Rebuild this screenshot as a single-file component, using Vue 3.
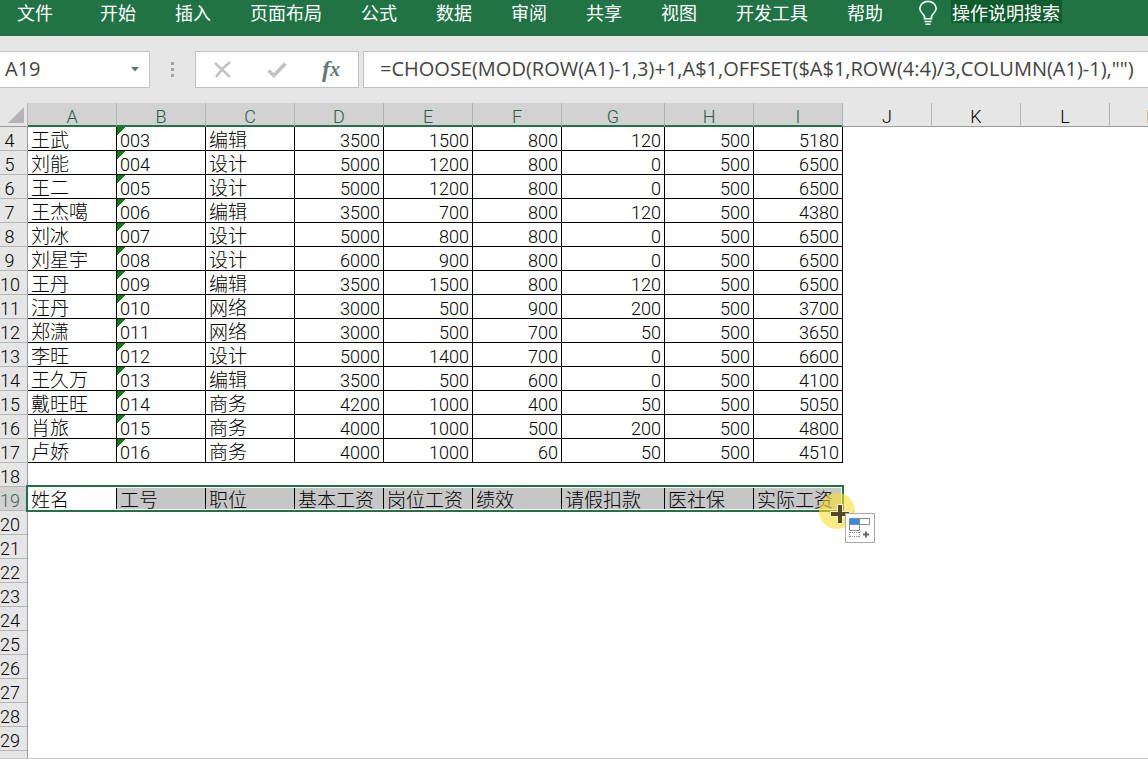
<script setup>
import { ref } from 'vue'

const tabs = ['开始', '插入', '页面布局', '公式', '数据', '审阅', '共享', '视图', '开发工具', '帮助']
const columns = ['A', 'B', 'C', 'D', 'E', 'F', 'G', 'H', 'I', 'J', 'K', 'L', 'M']
const selectedColumns = 9

const cellName = ref('A19')
const formula = ref('=CHOOSE(MOD(ROW(A1)-1,3)+1,A$1,OFFSET($A$1,ROW(4:4)/3,COLUMN(A1)-1),"")')

const staff = [
  ['王武', '003', '编辑', 3500, 1500, 800, 120, 500, 5180],
  ['刘能', '004', '设计', 5000, 1200, 800, 0, 500, 6500],
  ['王二', '005', '设计', 5000, 1200, 800, 0, 500, 6500],
  ['王杰噶', '006', '编辑', 3500, 700, 800, 120, 500, 4380],
  ['刘冰', '007', '设计', 5000, 800, 800, 0, 500, 6500],
  ['刘星宇', '008', '设计', 6000, 900, 800, 0, 500, 6500],
  ['王丹', '009', '编辑', 3500, 1500, 800, 120, 500, 6500],
  ['汪丹', '010', '网络', 3000, 500, 900, 200, 500, 3700],
  ['郑潇', '011', '网络', 3000, 500, 700, 50, 500, 3650],
  ['李旺', '012', '设计', 5000, 1400, 700, 0, 500, 6600],
  ['王久万', '013', '编辑', 3500, 500, 600, 0, 500, 4100],
  ['戴旺旺', '014', '商务', 4200, 1000, 400, 50, 500, 5050],
  ['肖旅', '015', '商务', 4000, 1000, 500, 200, 500, 4800],
  ['卢娇', '016', '商务', 4000, 1000, 60, 50, 500, 4510],
]
const titles = ['姓名', '工号', '职位', '基本工资', '岗位工资', '绩效', '请假扣款', '医社保', '实际工资']

const rows = []
for (let n = 4; n <= 30; n++) {
  if (n <= 17) rows.push({ n, kind: 'data', cells: staff[n - 4] })
  else if (n === 19) rows.push({ n, kind: 'selected', cells: titles })
  else rows.push({ n, kind: 'blank', cells: [] })
}

const cellClass = (row, i) => ({
  used: i < row.cells.length,
  num: typeof row.cells[i] === 'number',
  flag: row.kind === 'data' && i === 1,
  han: i < row.cells.length && (row.kind === 'selected' || i === 0 || i === 2),
})
</script>

<template>
  <div class="app">
    <nav class="ribbon" aria-label="功能区">
      <button class="tab file">文件</button>
      <button v-for="t in tabs" :key="t" class="tab">{{ t }}</button>
      <svg class="bulb" viewBox="0 0 20 26" aria-hidden="true">
        <path d="M6.500 18.800v-2.300c0-2-4.700-3.800-4.700-8.100A8.200 7.600 0 0 1 10 1.400a8.200 7.600 0 0 1 8.200 7c0 4.300-4.700 6.100-4.700 8.100v2.300z" />
        <path d="M6.500 21.500h7M7.500 24.300h5" />
      </svg>
      <button class="tell">操作说明搜索</button>
    </nav>

    <div class="bar">
      <div class="namebox">
        <input v-model="cellName" aria-label="名称框" />
        <button class="drop" aria-label="名称列表"><svg viewBox="0 0 8 5"><path d="M0 0h8L4 4.500z" /></svg></button>
      </div>
      <div class="grip"><i></i><i></i><i></i></div>
      <div class="actions">
        <button aria-label="取消">
          <svg class="ico" viewBox="0 0 20 20"><path d="M2 3l15 14M17 2C12 6 7 11 3 17" stroke="#c2c2c2" stroke-width="2.400" fill="none" /></svg>
        </button>
        <button aria-label="输入">
          <svg class="ico" viewBox="0 0 20 20"><path d="M1.500 10.500l5.500 5L18.500 3.500" stroke="#c2c2c2" stroke-width="3.600" fill="none" /></svg>
        </button>
        <button class="fx" aria-label="插入函数"><span class="f">f</span><span class="x">x</span></button>
      </div>
      <input v-model="formula" class="formula" aria-label="编辑栏" />
    </div>

    <main class="sheet">
      <table>
        <colgroup>
          <col class="c-num" />
          <col v-for="c in columns" :key="c" :class="c === 'G' ? 'c-wide' : 'c-std'" />
        </colgroup>
        <thead>
          <tr>
            <th class="corner"><svg viewBox="0 0 16 16"><path d="M16 0v16H0z" /></svg></th>
            <th v-for="(c, i) in columns" :key="c" scope="col" :class="{ on: i < selectedColumns }">{{ c }}</th>
          </tr>
        </thead>
        <tbody>
          <tr v-for="r in rows" :key="r.n" :class="r.kind">
            <th scope="row">{{ r.n }}</th>
            <td v-for="(c, i) in columns" :key="c" :class="cellClass(r, i)">{{ r.cells[i] }}</td>
          </tr>
        </tbody>
      </table>
      <div class="selection"></div>
      <div class="halo"></div>
      <svg class="cross" viewBox="0 0 20 20" aria-hidden="true">
        <path d="M10 0v20M0 10h20" stroke="#fff7c0" stroke-width="6" />
        <path d="M10 1v18M1 10h18" stroke="#55482a" stroke-width="4" />
      </svg>
      <button class="fill" aria-label="自动填充选项">
        <svg viewBox="0 0 28 28">
          <path d="M4 5h10v6H4z" fill="#2f8de4" />
          <path d="M3.500 4.500h20v6h-20zM13.500 4.500v6M3.500 10.500v6h10v-6" fill="none" stroke="#8c8c8c" />
          <path d="M3.500 18v5M13.500 18v5M4 18.500h10M4 22.500h10" fill="none" stroke="#8c8c8c" stroke-dasharray="1 1" />
          <path d="M20 17.500v6M17 20.500h6" stroke="#6a6a6a" stroke-width="2" />
        </svg>
      </button>
    </main>
  </div>
</template>

<style>
body {
  margin: 0;
  overflow: hidden;
}
</style>

<style scoped>
.app {
  display: flex;
  flex-direction: column;
  height: 100vh;
  overflow: hidden;
  background: #e6e6e6;
  font-family: Roboto, "Noto Sans CJK SC", sans-serif;
}
button,
input {
  border: 0;
  margin: 0;
  padding: 0;
  background: none;
  font: inherit;
  color: inherit;
  outline: none;
}
.ribbon {
  display: flex;
  align-items: flex-start;
  flex: none;
  height: 36px;
  padding-left: 17px;
  background: #217346;
  color: #fff;
  font: 18px/24px "Noto Sans CJK SC", sans-serif;
  white-space: nowrap;
}
.tab {
  flex: none;
  margin-right: 39px;
}
.file {
  margin-right: 47px;
}
.bulb {
  flex: none;
  width: 20px;
  height: 26px;
  margin: 0 13px 0 -4px;
  fill: none;
  stroke: #fff;
  stroke-width: 1.6;
}
.tell {
  flex: none;
  height: 23px;
  padding: 0 2px 0 1px;
  line-height: 24px;
  background: #0f5c2f;
}
.bar {
  display: flex;
  flex: none;
  padding: 15px 0;
  height: 37px;
  color: #444;
}
.namebox,
.actions,
.formula {
  box-sizing: border-box;
  background: #fff;
  border: 1px solid #c3c3c3;
}
.namebox {
  display: flex;
  align-items: center;
  width: 150px;
  border-left: 0;
}
.namebox input {
  flex: 1;
  min-width: 0;
  padding: 0 0 2px 5px;
  font: 20px "Open Sans", sans-serif;
}
.drop {
  width: 28px;
  height: 35px;
  display: grid;
  place-items: center;
}
.drop svg {
  width: 8px;
  height: 5px;
  fill: #5f7a72;
}
.grip {
  display: flex;
  flex-direction: column;
  justify-content: center;
  align-items: center;
  gap: 3px;
  width: 45px;
}
.grip i {
  width: 3px;
  height: 3px;
  background: #a6a6a6;
}
.actions {
  display: flex;
  align-items: center;
  width: 164px;
  margin-right: 4px;
}
.actions button {
  flex: 1;
  height: 35px;
  display: grid;
  place-items: center;
}
.actions .ico {
  width: 20px;
  height: 20px;
}
.actions .fx {
  display: flex;
  align-items: center;
  justify-content: center;
  color: #5f7a72;
  font: italic bold 24px "Liberation Serif", serif;
}
.fx .x {
  font-size: 20px;
}
.formula {
  flex: 1;
  min-width: 0;
  padding: 0 0 2px 16px;
  font: 20px "Open Sans", sans-serif;
  border-right: 0;
}
.sheet {
  position: relative;
  flex: 1;
  min-height: 0;
  overflow: hidden;
  background: #fff;
  border-bottom: 1px solid #c6c6c6;
}
table {
  width: 0;
  table-layout: fixed;
  border-collapse: separate;
  border-spacing: 0;
  font-size: 18px;
  font-weight: 300;
  line-height: 18px;
  color: #000;
}
.c-num {
  width: 28px;
}
.c-std {
  width: 89px;
}
.c-wide {
  width: 103px;
}
th,
td {
  box-sizing: border-box;
  height: 24px;
  padding: 5px 3px 0;
  font-weight: inherit;
  vertical-align: top;
  white-space: nowrap;
}
thead th {
  padding-top: 6px;
  line-height: 16px;
  background: #e6e6e6;
  border-right: 1px solid #b4b4b4;
  border-bottom: 1px solid #9b9b9b;
}
thead th.on {
  color: #2a5a48;
  background: #d2d2d2;
  border-bottom: 2px solid #217346;
}
thead .corner {
  padding: 0;
}
.corner svg {
  display: block;
  width: 16px;
  height: 16px;
  margin: 4px 3px 0 auto;
  fill: #b4b4b4;
}
tbody th {
  padding: 5px 8px 0 0;
  background: #e6e6e6;
  border-right: 1px solid #9b9b9b;
  border-bottom: 1px solid #b4b4b4;
}
.data .used {
  border-right: 1px solid #000;
  border-bottom: 1px solid #000;
}
.num {
  text-align: right;
}
.han {
  font-size: 19px;
}
.flag {
  background: linear-gradient(135deg, #107c10 6px, transparent 6px);
}
.selected th {
  color: #3b6b58;
  background: #d2d2d2;
}
.selected .used {
  background: #c6c6c6;
  border-right: 1px solid #000;
}
.selected td:nth-child(2) {
  background: #fff;
}
.selection {
  position: absolute;
  top: 382px;
  left: 26px;
  width: 818px;
  height: 27px;
  box-sizing: border-box;
  border: 2px solid #217346;
  box-shadow: inset 0 0 0 1px #fff;
}
.halo {
  position: absolute;
  top: 390px;
  left: 819px;
  width: 36px;
  height: 36px;
  border-radius: 50%;
  background: rgba(250, 220, 50, 0.6);
}
.cross {
  position: absolute;
  top: 401px;
  left: 830px;
  width: 20px;
  height: 20px;
}
.fill {
  position: absolute;
  top: 410px;
  left: 845px;
  box-sizing: border-box;
  width: 30px;
  height: 30px;
  background: #fff;
  border: 1px solid #ababab;
}
.fill svg {
  display: block;
  width: 28px;
  height: 28px;
}
</style>
